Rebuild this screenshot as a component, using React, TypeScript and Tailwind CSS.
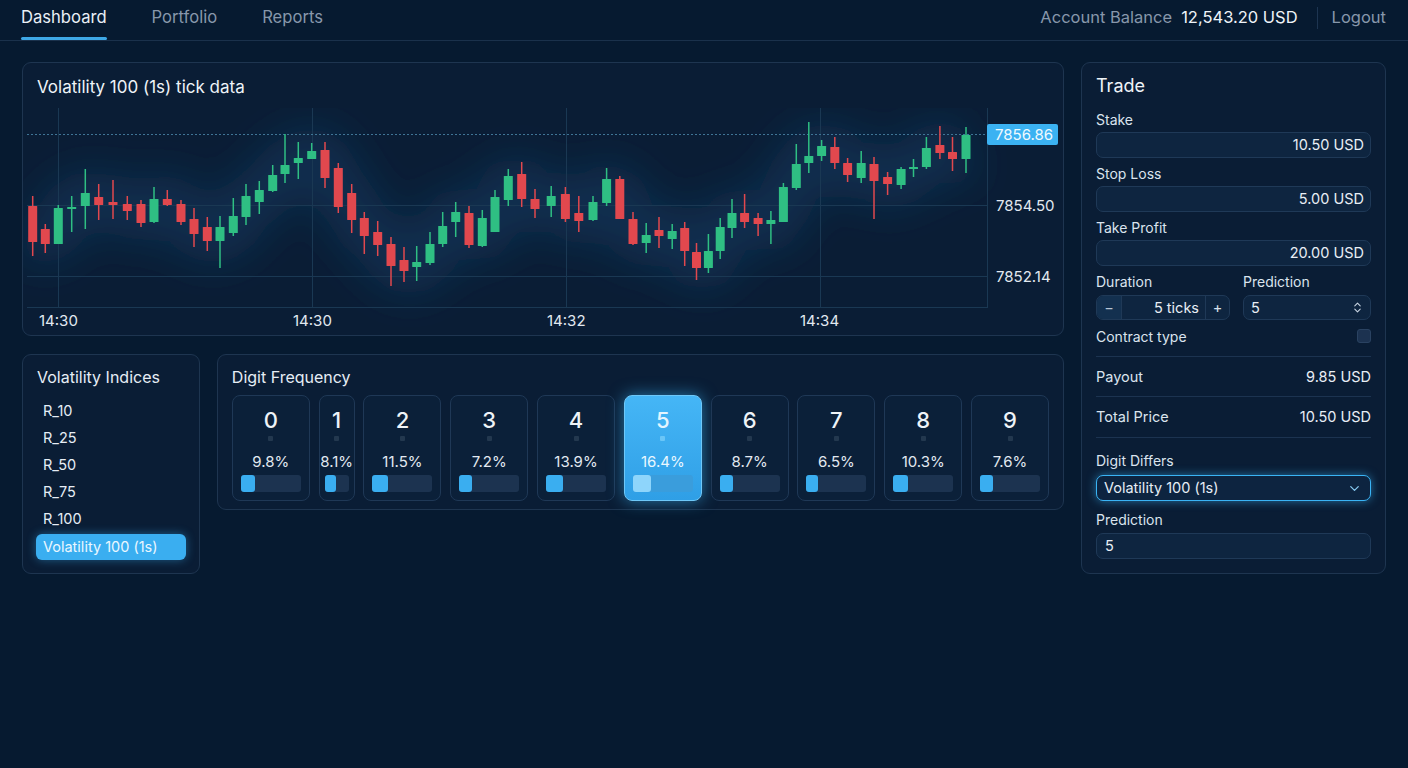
import { ChevronDown, ChevronsUpDown } from "lucide-react";

// [x, bodyTop, bodyBottom, wickTop, wickBottom, green]
const candles: [number, number, number, number, number, number][] = [
  [32.7, 206, 242, 196, 256, 0], [45.3, 229, 244, 224, 253, 0], [58.3, 208, 244, 205, 244, 1],
  [71.7, 207, 209, 196, 232, 1], [85.3, 193, 206, 169, 229, 1], [98.7, 197, 205, 184, 220, 0],
  [113, 202, 205, 180, 219, 0], [127.3, 204, 211, 196, 220, 0], [141, 204, 223, 200, 227, 0],
  [154, 199, 222, 187, 223, 1], [167.3, 199, 205, 190, 206, 0], [181, 204, 222, 200, 225, 0],
  [194, 219, 234, 208, 247, 0], [207.3, 227, 241, 217, 251, 0], [220, 227, 241, 216, 268, 1],
  [233.3, 216, 233, 198, 236, 1], [246, 196, 217, 184, 225, 1], [259.3, 190, 202, 181, 214, 1],
  [272.7, 175, 191, 165, 192, 1], [285, 165, 174, 134, 183, 1], [298.3, 158, 163, 142, 179, 1],
  [311.7, 151, 159, 143, 159, 1], [325, 150, 178, 142, 188, 0], [338.3, 168, 207, 163, 213, 0],
  [351.7, 193, 220, 184, 233, 0], [364.3, 218, 236, 212, 254, 0], [377.7, 232, 245, 221, 256, 0],
  [391, 244, 266, 237, 286, 0], [404, 260, 271, 247, 282, 0], [416.7, 262, 267, 246, 281, 1],
  [430, 244, 263, 232, 265, 1], [442.7, 226, 244, 212, 247, 1], [455.7, 212, 222, 202, 237, 1],
  [469, 213, 245, 206, 248, 0], [482.3, 218, 246, 210, 247, 1], [495, 197, 232, 190, 232, 1],
  [508.3, 176, 200, 169, 206, 1], [521.7, 174, 199, 162, 207, 0], [535, 199, 209, 189, 218, 0],
  [551.2, 196, 206, 186, 217, 1], [565.4, 194, 219, 187, 222, 0], [578.8, 213, 221, 196, 232, 0],
  [593, 202, 220, 196, 221, 1], [606.6, 179, 203, 168, 206, 1], [619.8, 179, 219, 176, 219, 0],
  [633, 219, 244, 212, 245, 0], [646.2, 235, 243, 223, 253, 1], [659, 230, 236, 217, 248, 0],
  [672.2, 231, 239, 224, 249, 1], [684.7, 228, 251, 222, 266, 0], [696.5, 252, 268, 243, 280, 0],
  [708.4, 251, 268, 234, 273, 1], [720.2, 227, 251, 218, 259, 1], [732, 213, 228, 199, 238, 1],
  [744.6, 213, 222, 194, 228, 0], [758.1, 218, 224, 213, 236, 0], [770.9, 220, 224, 211, 244, 1],
  [783.4, 187, 222, 183, 222, 1], [796.3, 164, 188, 144, 190, 1], [808.8, 156, 163, 122, 173, 1],
  [821.6, 146, 156, 140, 161, 1], [834.8, 147, 163, 137, 169, 0], [847.6, 163, 175, 158, 182, 0],
  [861.2, 163, 178, 151, 183, 1], [874, 164, 181, 157, 219, 0], [887.6, 177, 184, 172, 195, 0],
  [901.1, 169, 185, 167, 189, 1], [913.5, 167, 169, 159, 177, 1], [926.4, 148, 167, 137, 169, 1],
  [939.9, 145, 153, 126, 159, 0], [952.5, 152, 159, 137, 171, 0], [966, 135, 159, 127, 173, 1],
];

const digits = [
  { d: 0, p: 9.8 }, { d: 1, p: 8.1, narrow: true }, { d: 2, p: 11.5 }, { d: 3, p: 7.2 }, { d: 4, p: 13.9 },
  { d: 5, p: 16.4, active: true }, { d: 6, p: 8.7 }, { d: 7, p: 6.5 }, { d: 8, p: 10.3 }, { d: 9, p: 7.6 },
];

function Chart() {
  const up = "#2fbf83";
  const dn = "#e1484e";
  const pts = candles.map((c) => `${c[0]},${(c[1] + c[2]) / 2}`).join(" ");
  return (
    <svg width={1040} height={227} className="block mt-[11px]">
      <defs>
        <filter id="glow" x="-10%" y="-100%" width="120%" height="300%">
          <feGaussianBlur stdDeviation="20" />
        </filter>
      </defs>
      <g transform="translate(-23 -108)">
        <polyline points={pts} fill="none" stroke="#1b5587" strokeOpacity={0.32} strokeWidth={56} strokeLinejoin="round" filter="url(#glow)" />
        {[205.5, 276.5, 307.5].map((y) => (
          <line key={y} x1={27} x2={988} y1={y} y2={y} stroke="#1a3853" strokeWidth={1} />
        ))}
        {[58.5, 312.5, 566.5, 820.5, 987.5].map((x) => (
          <line key={x} x1={x} x2={x} y1={108} y2={307} stroke="#1a3853" strokeWidth={1} />
        ))}
        <line x1={27} x2={987} y1={134.5} y2={134.5} stroke="#3f7596" strokeWidth={1} strokeDasharray="2 2" />
        {candles.map((c, i) => {
          const col = c[5] ? up : dn;
          return (
            <g key={i}>
              <line x1={c[0]} x2={c[0]} y1={c[3]} y2={c[4]} stroke={col} strokeWidth={1.5} />
              <rect x={c[0] - 4.5} y={c[1]} width={9} height={Math.max(2, c[2] - c[1])} fill={col} rx={0.5} />
            </g>
          );
        })}
        <g fontSize={15} fill="#e2e9f1" fontFamily="Inter, sans-serif">
          <text x={39} y={326}>14:30</text>
          <text x={293} y={326}>14:30</text>
          <text x={547} y={326}>14:32</text>
          <text x={800} y={326}>14:34</text>
          <text x={996} y={210.5}>7854.50</text>
          <text x={996} y={281.5}>7852.14</text>
        </g>
        <rect x={987} y={124} width={71} height={21} rx={2} fill="#3bb2f2" />
        <text x={995} y={140} fontSize={15} fill="#effaff" fontFamily="Inter, sans-serif">7856.86</text>
      </g>
    </svg>
  );
}

function Field({ label, value }: { label: string; value: string }) {
  return (
    <>
      <div className="mt-[8px] text-[14px] leading-[16px] text-[#dbe4ee]">{label}</div>
      <div className="mt-[4px] h-[26px] rounded-[7px] border border-[#1f3957] bg-[#0e2540] flex items-center justify-end pr-[6px] text-[14.5px] text-[#e8eef5]">
        {value}
      </div>
    </>
  );
}

export default function App() {
  return (
    <div className="min-h-screen w-full bg-[#061a30] font-[Inter,sans-serif] text-[#e6edf5]">
      <header className="h-[41px] border-b border-[#1a314b] flex items-stretch justify-between pl-[21px] pr-[22px]">
        <nav className="flex gap-[45px] text-[16.6px]">
          <a className="relative flex items-center pb-[5px] text-[#e9eff6]">
            Dashboard
            <span className="absolute left-0 right-0 bottom-0 h-[3px] rounded-full bg-[#3ea8e6]" />
          </a>
          <a className="flex items-center pb-[5px] text-[#8797ab]">Portfolio</a>
          <a className="flex items-center pb-[5px] text-[#8797ab]">Reports</a>
        </nav>
        <div className="flex items-center pb-[5px] text-[16.5px]">
          <span className="text-[#8797ab]">Account Balance</span>
          <span className="ml-[9px] text-[#eef3f8]">12,543.20 USD</span>
          <span className="ml-[19px] mr-[14px] w-px h-[22px] bg-[#1d3551]" />
          <span className="text-[#8797ab]">Logout</span>
        </div>
      </header>

      <main className="flex gap-[17px] px-[22px] pt-[21px]">
        <div className="w-[1042px] flex flex-col gap-[18px]">
          <section className="h-[274px] rounded-[9px] border border-[#1e3550] bg-[#0a1d35] overflow-hidden">
            <div className="px-[14px] pt-[14px] text-[17px] leading-[20px] text-[#eef3f8]">Volatility 100 (1s) tick data</div>
            <Chart />
          </section>

          <div className="flex gap-[17px] items-start">
            <section className="w-[178px] h-[220px] rounded-[9px] border border-[#1e3550] bg-[#0a1d35] px-[13px] pt-[12px]">
              <div className="px-[1px] text-[16px] leading-[20px] text-[#e6edf5]">Volatility Indices</div>
              <ul className="mt-[10px] text-[14.5px]">
                {["R_10", "R_25", "R_50", "R_75", "R_100"].map((r) => (
                  <li key={r} className="h-[27px] flex items-center px-[7px] text-[#e6edf5]">{r}</li>
                ))}
                <li className="mt-[2px] h-[26px] flex items-center px-[7px] rounded-[6px] bg-[#3aaef0] text-[#eaf7ff] shadow-[0_0_10px_rgba(58,174,240,0.45)]">
                  Volatility 100 (1s)
                </li>
              </ul>
            </section>

            <section className="flex-1 h-[156px] rounded-[9px] border border-[#1e3550] bg-[#0a1d35] px-[14px] pt-[12px]">
              <div className="text-[16px] leading-[20px] text-[#e6edf5]">Digit Frequency</div>
              <div className="mt-[8px] flex gap-[8.8px]">
                {digits.map((g) => (
                  <div
                    key={g.d}
                    className={`${g.narrow ? "w-[36px]" : "w-[78px]"} h-[106px] flex flex-col items-center rounded-[8px] border pt-[11px] ${
                      g.active
                        ? "border-[#6ec8f8] bg-gradient-to-b from-[#45b6f6] to-[#2f9fe6] shadow-[0_0_16px_rgba(56,176,240,0.6)]"
                        : "border-[#1f3856] bg-[#0b2039]"
                    }`}
                  >
                    <div className={`text-[22px] leading-[26px] font-medium ${g.active ? "text-[#e3f5ff]" : "text-[#eef3f8]"}`}>{g.d}</div>
                    <div className={`mt-[3px] w-[5px] h-[5px] rounded-[1px] ${g.active ? "bg-[#6ac6f7]" : "bg-[#23384f]"}`} />
                    <div className={`mt-[12px] text-[15px] leading-[18px] ${g.active ? "text-[#eaf7ff]" : "text-[#e2e9f1]"}`}>{g.p}%</div>
                    <div className={`mt-[4px] w-full ${g.narrow ? "px-[5px]" : "px-[8px]"}`}>
                      <div className={`h-[17px] rounded-[3px] ${g.active ? "bg-[#3a9ddc]" : "bg-[#1c3350]"}`}>
                        <div
                          className={`h-full rounded-[3px] ${g.active ? "bg-[#8ed5fb]" : "bg-[#3aaef0]"}`}
                          style={{ width: g.narrow ? 11 : 8 + g.p * 0.62 }}
                        />
                      </div>
                    </div>
                  </div>
                ))}
              </div>
            </section>
          </div>
        </div>

        <aside className="w-[305px] h-[512px] rounded-[9px] border border-[#1e3550] bg-[#0a1d35] px-[14px] pt-[12px] flex flex-col">
          <div className="text-[18px] leading-[22px] text-[#eef3f8]">Trade</div>
          <div className="h-[7px]" />
          <Field label="Stake" value="10.50 USD" />
          <Field label="Stop Loss" value="5.00 USD" />
          <Field label="Take Profit" value="20.00 USD" />

          <div className="mt-[8px] grid grid-cols-[134px_1fr] gap-x-[13px] text-[14px] leading-[16px] text-[#dbe4ee]">
            <div>Duration</div>
            <div>Prediction</div>
          </div>
          <div className="mt-[5px] grid grid-cols-[134px_1fr] gap-x-[13px] h-[25px] text-[14.5px]">
            <div className="flex rounded-[7px] border border-[#1f3957] bg-[#0e2540] overflow-hidden">
              <div className="w-[25px] flex items-center justify-center border-r border-[#1f3957] bg-[#13304f] text-[#b8c6d6]">−</div>
              <div className="flex-1 flex items-center justify-end pr-[6px] text-[#e8eef5]">5 ticks</div>
              <div className="w-[24px] flex items-center justify-center border-l border-[#1f3957] text-[#d8e2ec]">+</div>
            </div>
            <div className="flex items-center justify-between rounded-[7px] border border-[#1f3957] bg-[#0e2540] pl-[7px] pr-[6px] text-[#e8eef5]">
              <span>5</span>
              <ChevronsUpDown size={13} strokeWidth={2} className="text-[#c9d5e2]" />
            </div>
          </div>

          <div className="mt-[8px] h-[16px] flex items-center justify-between text-[14px] text-[#dbe4ee]">
            <span>Contract type</span>
            <span className="w-[14px] h-[14px] rounded-[3px] border border-[#2a4261] bg-[#1c3250]" />
          </div>

          <div className="mt-[12px] border-t border-[#1c3350]" />
          <div className="h-[40px] flex items-center justify-between text-[14.5px] border-b border-[#1c3350]">
            <span className="text-[#dbe4ee]">Payout</span>
            <span className="text-[#e8eef5]">9.85 USD</span>
          </div>
          <div className="h-[41px] flex items-center justify-between text-[14.5px] border-b border-[#1c3350]">
            <span className="text-[#dbe4ee]">Total Price</span>
            <span className="text-[#e8eef5]">10.50 USD</span>
          </div>

          <div className="mt-[15px] text-[14px] leading-[16px] text-[#dbe4ee]">Digit Differs</div>
          <div className="mt-[6px] h-[26px] flex items-center justify-between rounded-[7px] border border-[#3ab4f5] bg-[#0d2440] pl-[7px] pr-[8px] text-[14.5px] text-[#e6edf5] shadow-[0_0_10px_rgba(56,178,245,0.55)]">
            <span>Volatility 100 (1s)</span>
            <ChevronDown size={15} strokeWidth={2} className="text-[#86c9f0]" />
          </div>

          <div className="mt-[11px] text-[14px] leading-[16px] text-[#dbe4ee]">Prediction</div>
          <div className="mt-[5px] h-[26px] flex items-center rounded-[7px] border border-[#1f3957] bg-[#0e2540] pl-[8px] text-[14.5px] text-[#e8eef5]">
            5
          </div>
        </aside>
      </main>
    </div>
  );
}
